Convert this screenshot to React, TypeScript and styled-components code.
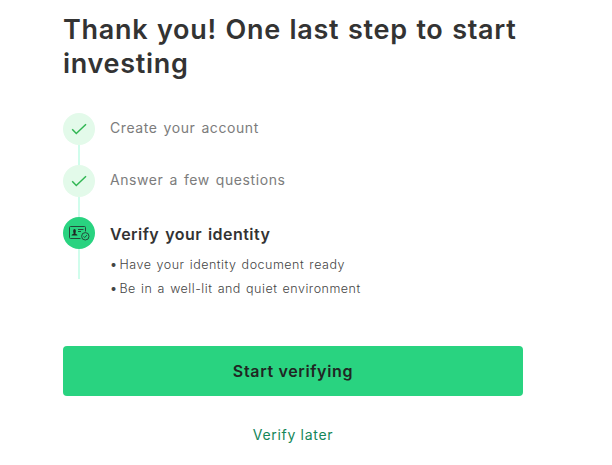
import React from "react";
import styled, { createGlobalStyle, css } from "styled-components";

const GlobalStyle = createGlobalStyle`
  * { box-sizing: border-box; }
  body { margin: 0; background: #fff; font-family: Inter, "Liberation Sans", sans-serif; }
`;

const Page = styled.main`
  width: 460px;
  margin-left: 63px;
  padding-top: 13px;
  display: flex;
  flex-direction: column;
`;

const Title = styled.h1`
  margin: 0 -10px 32px 0;
  font-size: 27px;
  line-height: 34px;
  font-weight: 600;
  letter-spacing: 0.7px;
  word-spacing: 1.2px;
  color: #333;
`;

const Steps = styled.ol`
  margin: 0;
  padding: 0;
  list-style: none;
`;

const Step = styled.li<{ $last?: boolean }>`
  display: flex;
  gap: 15px;
  height: ${(p) => (p.$last ? 129 : 52)}px;
`;

const Rail = styled.div<{ $last?: boolean }>`
  width: 32px;
  height: ${(p) => (p.$last ? "62px" : "100%")};
  display: flex;
  flex-direction: column;
  align-items: center;

  &::after {
    content: "";
    flex: 1;
    width: 2px;
    background: #d0fdec;
  }
`;

const Badge = styled.div<{ $active?: boolean }>`
  width: 32px;
  height: 32px;
  border-radius: 50%;
  display: flex;
  align-items: center;
  justify-content: center;
  background: ${(p) => (p.$active ? "#29d380" : "#e3faea")};
`;

const StepBody = styled.div`
  flex: 1;
  white-space: nowrap;
`;

const StepLabel = styled.div<{ $active?: boolean }>`
  font-size: 14px;
  line-height: 30px;
  letter-spacing: 0.58px;
  word-spacing: 1.5px;
  color: #7c7c7c;
  ${(p) =>
    p.$active &&
    css`
      font-size: 16px;
      line-height: 35px;
      font-weight: 600;
      letter-spacing: 0.45px;
      color: #333;
    `}
`;

const Hints = styled.ul`
  margin: 1px 0 0;
  padding: 0;
  list-style: none;
`;

const Hint = styled.li`
  display: flex;
  gap: 3px;
  font-size: 12.5px;
  line-height: 24px;
  font-weight: 300;
  letter-spacing: 0.5px;
  word-spacing: 1.2px;
  color: #444;
  &::before {
    content: "•";
    width: 6.5px;
    font-weight: 400;
    letter-spacing: 0;
  }
`;

const PrimaryButton = styled.button`
  height: 50px;
  padding: 0;
  border: 0;
  border-radius: 4px;
  background: #29d380;
  color: #202623;
  font: 600 16px/50px Inter, "Liberation Sans", sans-serif;
  letter-spacing: 0.65px;
`;

const LaterLink = styled.a`
  align-self: center;
  margin-top: 27px;
  font-size: 14px;
  line-height: 24px;
  letter-spacing: 0.7px;
  color: #138659;
`;

const Check = () => (
  <svg width="16" height="12" viewBox="0 0 16 12" fill="none">
    <path d="M1.2 6.2 5.3 10.5 15 1.2" stroke="#31b653" strokeWidth="1.5" />
  </svg>
);

const IdCard = () => (
  <svg width="22" height="16" viewBox="0 0 22 16" fill="none" stroke="#24493a" strokeWidth="1">
    <path d="M12.5 13.5H2.5a1 1 0 0 1-1-1v-10a1 1 0 0 1 1-1h14a1 1 0 0 1 1 1v4" />
    <path d="M10 4.5h5.5M10 6.5h3" />
    <path d="M3.5 10.5c0-1.5 2-1.5 2.4-2.1C5 7.5 4.8 4 6.5 4s1.6 3.5.7 4.4C7.7 9 9.5 9 9.5 10.5Z" fill="#202623" stroke="none" />
    <circle cx="17.3" cy="11.3" r="3.7" />
    <path d="m15.5 11.3 1.2 1.2 2.2-2.4" />
  </svg>
);

export default function App() {
  return (
    <>
      <GlobalStyle />
      <Page>
        <Title>Thank you! One last step to start investing</Title>
        <Steps>
          {["Create your account", "Answer a few questions"].map((label) => (
            <Step key={label}>
              <Rail>
                <Badge><Check /></Badge>
              </Rail>
              <StepBody><StepLabel>{label}</StepLabel></StepBody>
            </Step>
          ))}
          <Step $last>
            <Rail $last>
              <Badge $active><IdCard /></Badge>
            </Rail>
            <StepBody>
              <StepLabel $active>Verify your identity</StepLabel>
              <Hints>
                <Hint>Have your identity document ready</Hint>
                <Hint>Be in a well-lit and quiet environment</Hint>
              </Hints>
            </StepBody>
          </Step>
        </Steps>
        <PrimaryButton>Start verifying</PrimaryButton>
        <LaterLink>Verify later</LaterLink>
      </Page>
    </>
  );
}
